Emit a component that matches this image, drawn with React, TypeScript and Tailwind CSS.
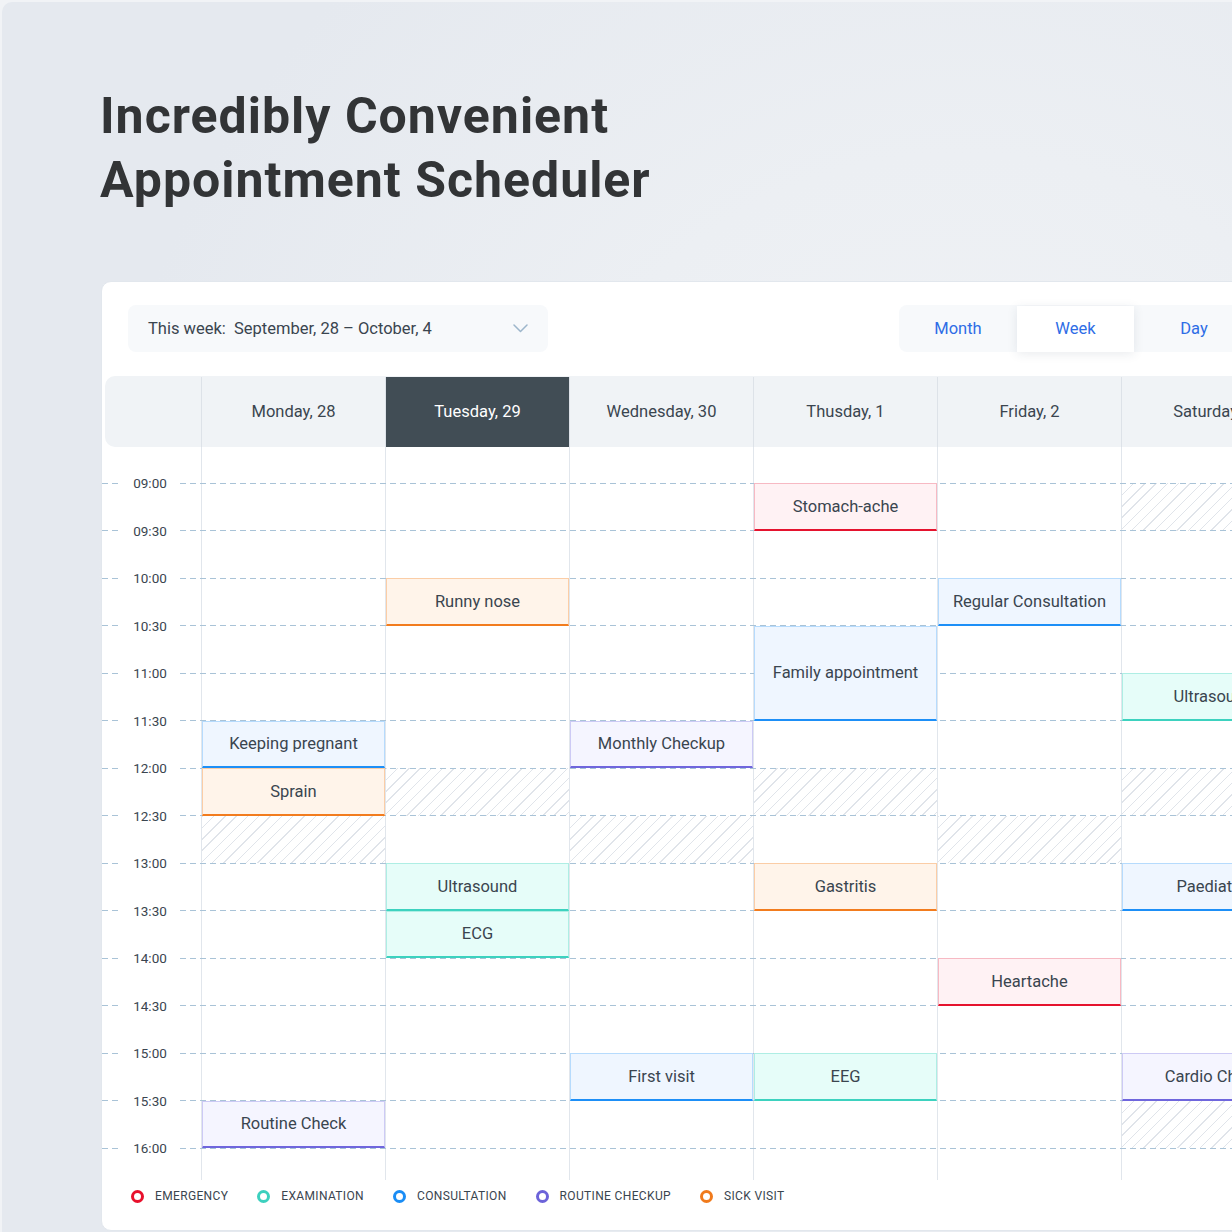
import React from "react";

type Kind = "emergency" | "exam" | "consult" | "routine" | "sick";

const kindClass: Record<Kind, string> = {
  emergency: "bg-[#fff2f4] border-[#f7b9c3] border-b-[#e5132e]",
  exam: "bg-[#e6fdf9] border-[#aeeee4] border-b-[#3dd2bf]",
  consult: "bg-[#eff6ff] border-[#b6dbfd] border-b-[#1d8ff7]",
  routine: "bg-[#f5f5ff] border-[#cdcaf5] border-b-[#6f66dd]",
  sick: "bg-[#fff4ea] border-[#fbcda6] border-b-[#f27c1e]",
};

type Ev = { d: number; s: number; n: number; t: string; k: Kind };

const events: Ev[] = [
  { d: 0, s: 5, n: 1, t: "Keeping pregnant", k: "consult" },
  { d: 0, s: 6, n: 1, t: "Sprain", k: "sick" },
  { d: 0, s: 13, n: 1, t: "Routine Check", k: "routine" },
  { d: 1, s: 2, n: 1, t: "Runny nose", k: "sick" },
  { d: 1, s: 8, n: 1, t: "Ultrasound", k: "exam" },
  { d: 1, s: 9, n: 1, t: "ECG", k: "exam" },
  { d: 2, s: 5, n: 1, t: "Monthly Checkup", k: "routine" },
  { d: 2, s: 12, n: 1, t: "First visit", k: "consult" },
  { d: 3, s: 0, n: 1, t: "Stomach-ache", k: "emergency" },
  { d: 3, s: 3, n: 2, t: "Family appointment", k: "consult" },
  { d: 3, s: 8, n: 1, t: "Gastritis", k: "sick" },
  { d: 3, s: 12, n: 1, t: "EEG", k: "exam" },
  { d: 4, s: 2, n: 1, t: "Regular Consultation", k: "consult" },
  { d: 4, s: 10, n: 1, t: "Heartache", k: "emergency" },
  { d: 5, s: 4, n: 1, t: "Ultrasound", k: "exam" },
  { d: 5, s: 8, n: 1, t: "Paediatric", k: "consult" },
  { d: 5, s: 12, n: 1, t: "Cardio Check", k: "routine" },
];

const hatches: { d: number; s: number }[] = [
  { d: 0, s: 7 },
  { d: 1, s: 6 },
  { d: 2, s: 7 },
  { d: 3, s: 6 },
  { d: 4, s: 7 },
  { d: 5, s: 0 },
  { d: 5, s: 6 },
  { d: 5, s: 13 },
];

const days = [
  "Monday, 28",
  "Tuesday, 29",
  "Wednesday, 30",
  "Thusday, 1",
  "Friday, 2",
  "Saturday, 3",
];

const times = [
  "09:00", "09:30", "10:00", "10:30", "11:00", "11:30", "12:00", "12:30",
  "13:00", "13:30", "14:00", "14:30", "15:00", "15:30", "16:00",
];

const legend: { label: string; color: string }[] = [
  { label: "Emergency", color: "border-[#e8102c]" },
  { label: "Examination", color: "border-[#3cd0be]" },
  { label: "Consultation", color: "border-[#1a8df5]" },
  { label: "Routine checkup", color: "border-[#6c63d9]" },
  { label: "Sick visit", color: "border-[#f07a1c]" },
];

const dash =
  "h-px bg-[linear-gradient(to_right,#a9c3d7_0_6px,transparent_6px_10px)] bg-[length:10px_1px] bg-repeat-x";

export default function App() {
  return (
    <div
      className="w-[1232px] h-[1232px] overflow-hidden bg-[#f1f3f6] pt-[2px] pl-[2px]"
      style={{ fontFamily: "Roboto, 'Liberation Sans', sans-serif" }}
    >
      <div className="h-full rounded-tl-[10px] bg-[radial-gradient(circle_at_78%_48%,#f1f3f6_0%,#eceff3_38%,#e5e9ef_75%)] pl-[98px] pt-[82px]">
        <h1 className="text-[50px] leading-[64px] font-bold text-[#323436] tracking-[1px]">
          Incredibly Convenient
          <br />
          Appointment Scheduler
        </h1>

        <div className="mt-[69px] ml-px w-[1220px] rounded-[10px] border border-[#e2e7ed] bg-white pt-[23px] pb-[18px]">
          {/* toolbar */}
          <div className="flex items-center pl-[26px]">
            <div className="flex h-[47px] w-[420px] items-center justify-between rounded-lg bg-[#f7f9fb] pl-5 pr-5">
              <span className="whitespace-pre pt-px text-[16.5px] text-[#3a454f]">
                {"This week:  September, 28 – October, 4"}
              </span>
              <svg width="15" height="9" viewBox="0 0 15 9" fill="none">
                <polyline
                  points="1,1 7.5,7.5 14,1"
                  stroke="#9db6cb"
                  strokeWidth="1.5"
                  strokeLinecap="round"
                  strokeLinejoin="round"
                />
              </svg>
            </div>
            <div className="ml-[351px] flex h-[47px] rounded-lg bg-[#f7f9fb] pt-px text-[16.5px] text-[#2e6de6]">
              <div className="flex w-[118px] items-center justify-center">Month</div>
              <div className="flex w-[117px] items-center justify-center bg-white shadow-[0_2px_10px_rgba(40,60,90,0.10)]">
                Week
              </div>
              <div className="flex w-[120px] items-center justify-center">Day</div>
            </div>
          </div>

          {/* header */}
          <div className="mt-6 ml-[3px] flex h-[71px] rounded-l-[10px] bg-[#f0f3f6] pt-px text-[16.5px] text-[#3a454f]">
            <div className="w-[96px] shrink-0" />
            {days.map((d, i) => (
              <div
                key={d}
                className={
                  i === 1
                    ? "flex w-[184px] shrink-0 items-center justify-center border-l border-[#dde2e8] bg-[#414d55] text-white"
                    : "flex w-[184px] shrink-0 items-center justify-center border-l border-[#dde2e8]"
                }
              >
                {d}
              </div>
            ))}
          </div>

          {/* body */}
          <div className="grid h-[733px] grid-cols-[99px_repeat(6,184px)] grid-rows-[36px_repeat(14,47.5px)_1fr] text-[#3a454f]">
            {days.map((d, i) => (
              <div
                key={"col" + d}
                className="border-l border-[#e1e6ec]"
                style={{ gridColumn: `${i + 2}`, gridRow: "1 / -1" }}
              />
            ))}
            {hatches.map((h, i) => (
              <div
                key={"h" + i}
                className="ml-px bg-[repeating-linear-gradient(135deg,#e0e4ea_0,#e0e4ea_1px,transparent_1px,transparent_8px)]"
                style={{ gridColumn: `${h.d + 2}`, gridRow: `${h.s + 2} / span 1` }}
              />
            ))}
            {times.map((t, i) => (
              <div
                key={t}
                className="relative"
                style={{ gridColumn: "1 / -1", gridRow: `${i + 2}` }}
              >
                <div className="flex h-4 -translate-y-1/2 items-center">
                  <div className={"w-[18px] " + dash} />
                  <span className="w-[60px] text-center text-[13.5px] leading-4">{t}</span>
                  <div className={"flex-1 " + dash} />
                </div>
              </div>
            ))}
            {events.map((e, i) => (
              <div
                key={"e" + i}
                className={
                  "relative z-10 ml-px flex items-center justify-center border border-b-2 pt-[2px] text-[16.5px] whitespace-nowrap text-[#3a454f] " +
                  kindClass[e.k]
                }
                style={{ gridColumn: `${e.d + 2}`, gridRow: `${e.s + 2} / span ${e.n}` }}
              >
                {e.t}
              </div>
            ))}
          </div>

          {/* legend */}
          <div className="flex h-8 items-center gap-[29px] pl-[29px] text-[12px] uppercase tracking-[0.35px] text-[#3a454f]">
            {legend.map((l) => (
              <div key={l.label} className="flex items-center gap-[11px]">
                <span className="flex">
                  <span className={"h-[13px] w-[13px] rounded-full border-[3px] " + l.color} />
                </span>
                <span>{l.label}</span>
              </div>
            ))}
          </div>
        </div>
      </div>
    </div>
  );
}
